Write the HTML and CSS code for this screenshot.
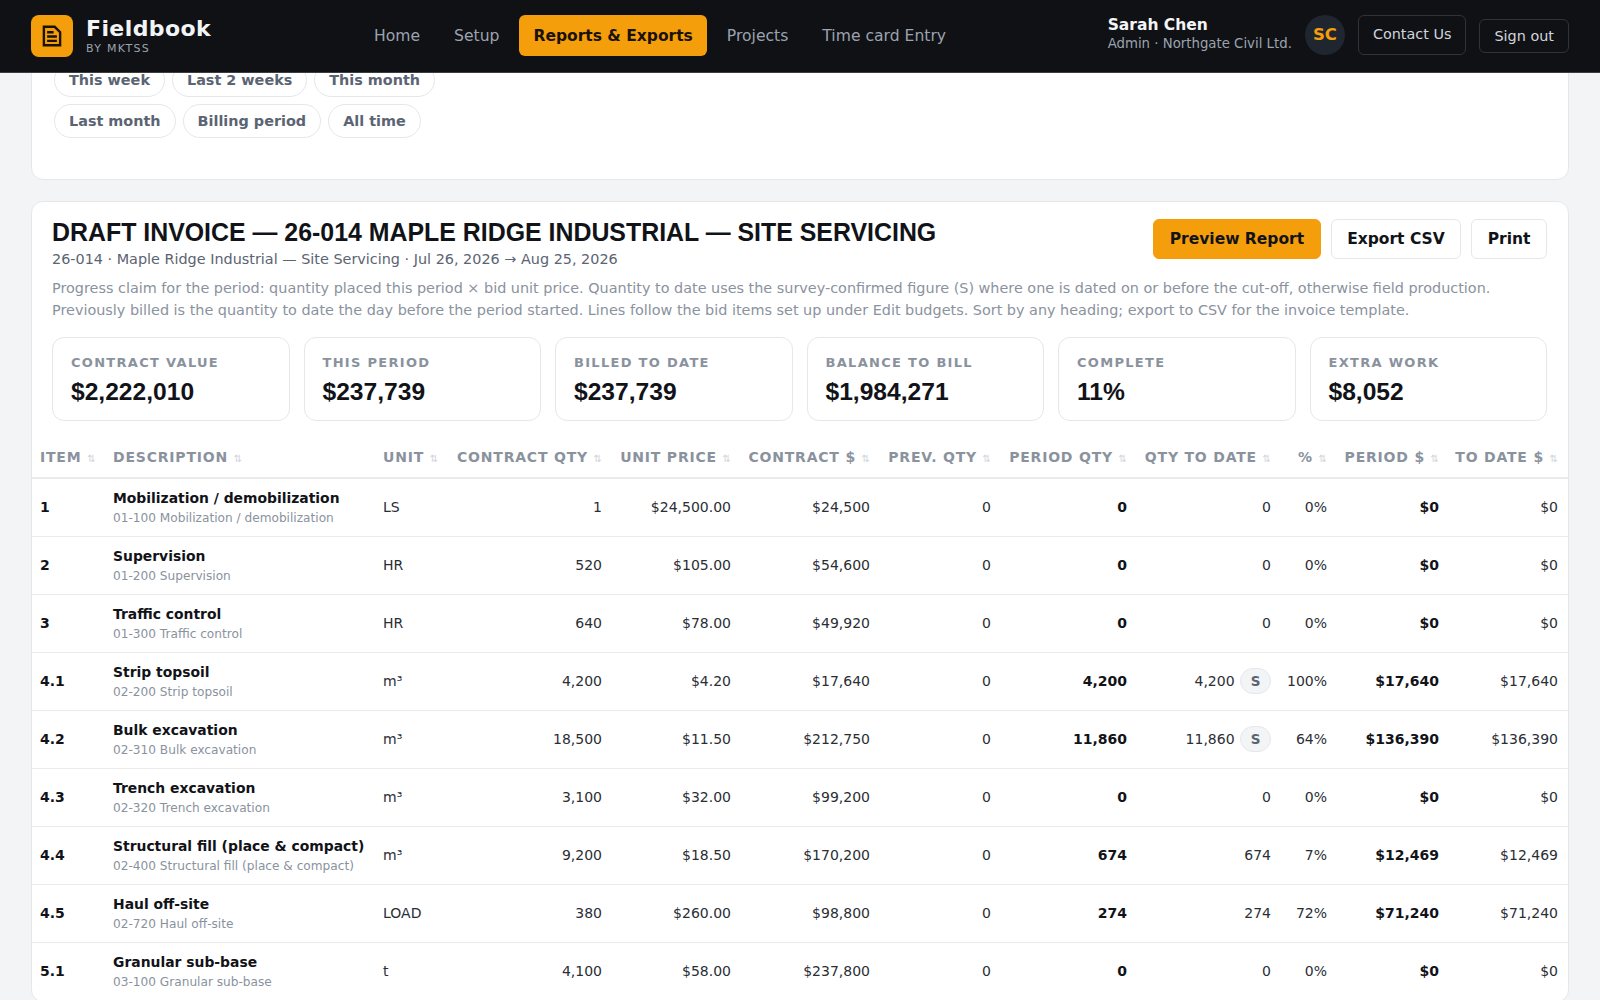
FILE: index.html
```html
<!DOCTYPE html>
<html lang="en">
<head>
<meta charset="utf-8">
<title>Fieldbook</title>
<link rel="stylesheet" href="styles.css">
</head>
<body>
<header class="topbar">
  <div class="brand">
    <div class="logo"><svg viewBox="0 0 24 24" width="26" height="26" fill="none" stroke="#1a1205" stroke-width="2.2" stroke-linejoin="miter"><path d="M4.5 3.5h10l5 5v12h-15z"/><path d="M7.5 8.5h6M7.5 12.5h9M7.5 16.5h9"/></svg></div>
    <div class="brand-text"><div class="brand-name">Fieldbook</div><div class="brand-sub">BY MKTSS</div></div>
  </div>
  <nav class="nav">
    <a class="nav-link">Home</a>
    <a class="nav-link">Setup</a>
    <a class="nav-link active">Reports &amp; Exports</a>
    <a class="nav-link">Projects</a>
    <a class="nav-link">Time card Entry</a>
  </nav>
  <div class="user">
    <div class="user-text"><div class="user-name">Sarah Chen</div><div class="user-role">Admin · Northgate Civil Ltd.</div></div>
    <div class="avatar">SC</div>
    <button class="ghost contact">Contact Us</button>
    <button class="ghost signout">Sign out</button>
  </div>
</header>
<main class="page">
  <section class="card filter">
    <div class="chips">
      <span class="chip">This week</span><span class="chip">Last 2 weeks</span><span class="chip">This month</span>
    </div>
    <div class="chips">
      <span class="chip">Last month</span><span class="chip">Billing period</span><span class="chip">All time</span>
    </div>
  </section>
  <section class="card report">
    <div class="report-head">
      <div class="report-title">
        <h1>DRAFT INVOICE — 26-014 MAPLE RIDGE INDUSTRIAL — SITE SERVICING</h1>
        <div class="meta">26-014 · Maple Ridge Industrial — Site Servicing · Jul 26, 2026 → Aug 25, 2026</div>
      </div>
      <div class="actions">
        <button class="btn primary">Preview Report</button>
        <button class="btn">Export CSV</button>
        <button class="btn">Print</button>
      </div>
    </div>
    <p class="note">Progress claim for the period: quantity placed this period × bid unit price. Quantity to date uses the survey-confirmed figure (S) where one is dated on or before the cut-off, otherwise field production. Previously billed is the quantity to date the day before the period started. Lines follow the bid items set up under Edit budgets. Sort by any heading; export to CSV for the invoice template.</p>
    <div class="stats">
      <div class="stat"><div class="stat-label">Contract value</div><div class="stat-value">$2,222,010</div></div>
      <div class="stat"><div class="stat-label">This period</div><div class="stat-value">$237,739</div></div>
      <div class="stat"><div class="stat-label">Billed to date</div><div class="stat-value">$237,739</div></div>
      <div class="stat"><div class="stat-label">Balance to bill</div><div class="stat-value">$1,984,271</div></div>
      <div class="stat"><div class="stat-label">Complete</div><div class="stat-value">11%</div></div>
      <div class="stat"><div class="stat-label">Extra work</div><div class="stat-value">$8,052</div></div>
    </div>
    <table class="grid">
      <colgroup>
        <col class="c1"><col class="c2"><col class="c3"><col class="c4"><col class="c5"><col class="c6"><col class="c7"><col class="c8"><col class="c9"><col class="c10"><col class="c11"><col class="c12">
      </colgroup>
      <thead>
        <tr>
          <th>Item <i>⇅</i></th><th>Description <i>⇅</i></th><th>Unit <i>⇅</i></th>
          <th class="r">Contract qty <i>⇅</i></th><th class="r">Unit price <i>⇅</i></th><th class="r">Contract $ <i>⇅</i></th>
          <th class="r">Prev. qty <i>⇅</i></th><th class="r">Period qty <i>⇅</i></th><th class="r">Qty to date <i>⇅</i></th>
          <th class="r">% <i>⇅</i></th><th class="r">Period $ <i>⇅</i></th><th class="r">To date $ <i>⇅</i></th>
        </tr>
      </thead>
      <tbody>
        <tr><td class="b">1</td><td><div class="name">Mobilization / demobilization</div><div class="sub">01-100 Mobilization / demobilization</div></td><td>LS</td><td class="r">1</td><td class="r">$24,500.00</td><td class="r">$24,500</td><td class="r">0</td><td class="r b">0</td><td class="r">0</td><td class="r">0%</td><td class="r b">$0</td><td class="r">$0</td></tr>
        <tr><td class="b">2</td><td><div class="name">Supervision</div><div class="sub">01-200 Supervision</div></td><td>HR</td><td class="r">520</td><td class="r">$105.00</td><td class="r">$54,600</td><td class="r">0</td><td class="r b">0</td><td class="r">0</td><td class="r">0%</td><td class="r b">$0</td><td class="r">$0</td></tr>
        <tr><td class="b">3</td><td><div class="name">Traffic control</div><div class="sub">01-300 Traffic control</div></td><td>HR</td><td class="r">640</td><td class="r">$78.00</td><td class="r">$49,920</td><td class="r">0</td><td class="r b">0</td><td class="r">0</td><td class="r">0%</td><td class="r b">$0</td><td class="r">$0</td></tr>
        <tr><td class="b">4.1</td><td><div class="name">Strip topsoil</div><div class="sub">02-200 Strip topsoil</div></td><td>m³</td><td class="r">4,200</td><td class="r">$4.20</td><td class="r">$17,640</td><td class="r">0</td><td class="r b">4,200</td><td class="r">4,200 <span class="badge">S</span></td><td class="r">100%</td><td class="r b">$17,640</td><td class="r">$17,640</td></tr>
        <tr><td class="b">4.2</td><td><div class="name">Bulk excavation</div><div class="sub">02-310 Bulk excavation</div></td><td>m³</td><td class="r">18,500</td><td class="r">$11.50</td><td class="r">$212,750</td><td class="r">0</td><td class="r b">11,860</td><td class="r">11,860 <span class="badge">S</span></td><td class="r">64%</td><td class="r b">$136,390</td><td class="r">$136,390</td></tr>
        <tr><td class="b">4.3</td><td><div class="name">Trench excavation</div><div class="sub">02-320 Trench excavation</div></td><td>m³</td><td class="r">3,100</td><td class="r">$32.00</td><td class="r">$99,200</td><td class="r">0</td><td class="r b">0</td><td class="r">0</td><td class="r">0%</td><td class="r b">$0</td><td class="r">$0</td></tr>
        <tr><td class="b">4.4</td><td><div class="name">Structural fill (place &amp; compact)</div><div class="sub">02-400 Structural fill (place &amp; compact)</div></td><td>m³</td><td class="r">9,200</td><td class="r">$18.50</td><td class="r">$170,200</td><td class="r">0</td><td class="r b">674</td><td class="r">674</td><td class="r">7%</td><td class="r b">$12,469</td><td class="r">$12,469</td></tr>
        <tr><td class="b">4.5</td><td><div class="name">Haul off-site</div><div class="sub">02-720 Haul off-site</div></td><td>LOAD</td><td class="r">380</td><td class="r">$260.00</td><td class="r">$98,800</td><td class="r">0</td><td class="r b">274</td><td class="r">274</td><td class="r">72%</td><td class="r b">$71,240</td><td class="r">$71,240</td></tr>
        <tr><td class="b">5.1</td><td><div class="name">Granular sub-base</div><div class="sub">03-100 Granular sub-base</div></td><td>t</td><td class="r">4,100</td><td class="r">$58.00</td><td class="r">$237,800</td><td class="r">0</td><td class="r b">0</td><td class="r">0</td><td class="r">0%</td><td class="r b">$0</td><td class="r">$0</td></tr>
      </tbody>
    </table>
  </section>
</main>
</body>
</html>
```
FILE: styles.css
```css
* { box-sizing: border-box; }
html, body { margin: 0; height: 1000px; overflow: hidden; }
body { background: #f3f4f6; font-family: "DejaVu Sans", sans-serif; color: #111318; font-size: 14px; }

.topbar { position: fixed; top: 0; left: 0; right: 0; z-index: 5; height: 73px; background: #0f1115; border-bottom: 1px solid #3a3d42; display: flex; align-items: center; padding: 0 31px 1px 31px; }
.brand { display: flex; align-items: center; gap: 13px; width: 329px; }
.logo { width: 42px; height: 42px; border-radius: 8px; background: #f59e0b; display: flex; align-items: center; justify-content: center; }
.brand-name { font-size: 22px; font-weight: 700; line-height: 26px; color: #f3f4f6; letter-spacing: 0.4px; }
.brand-sub { font-size: 11px; line-height: 13px; letter-spacing: 1.3px; color: #9ca3af; }
.nav { display: flex; align-items: center; gap: 6px; flex: 1; }
.nav-link { padding: 0 14px; height: 41px; display: flex; align-items: center; border-radius: 6px; color: #9ca3af; font-size: 15.6px; }
.nav-link.active { background: #f59e0b; color: #1a1205; font-weight: 700; font-size: 15.5px; }
.user { display: flex; align-items: center; gap: 13px; }
.user-text { margin-bottom: 2px; }
.user-name { color: #f3f4f6; font-size: 15.5px; font-weight: 700; line-height: 19px; }
.user-role { color: #9ca3af; font-size: 13.3px; line-height: 18px; }
.avatar { width: 40px; height: 40px; margin-bottom: 2px; border-radius: 50%; background: #1f2630; color: #f59e0b; font-weight: 700; font-size: 16.5px; display: flex; align-items: center; justify-content: center; }
.ghost { background: transparent; border: 1px solid #2f333a; border-radius: 6px; color: #d1d5db; font: 14.4px "DejaVu Sans", sans-serif; padding: 0 14px; }
.contact { height: 40px; margin-bottom: 2px; padding-bottom: 2px; }
.signout { height: 34px; }

.page { padding: 0 31px; }
.card { background: #fff; border: 1px solid #e5e7eb; border-radius: 12px; }
.filter { height: 180px; padding: 62px 22px 0; margin-bottom: 21px; }
.chips { display: flex; gap: 7px; margin-bottom: 7px; }
.chip { height: 34px; padding: 0 14px; display: flex; align-items: center; border: 1px solid #e5e7eb; border-radius: 17px; color: #5b6472; font-size: 14.4px; font-weight: 700; }

.report { padding: 15px 0 0; }
.report-head { display: flex; justify-content: space-between; padding: 0 21px 0 20px; }
.report-title { padding-top: 0; }
h1 { margin: 0; font: 700 24.9px/30px "Liberation Sans", sans-serif; color: #111318; }
.meta { font-size: 14.4px; line-height: 24px; color: #5b6472; }
.actions { display: flex; gap: 10px; padding-top: 2px; height: 42px; }
.btn { height: 40px; padding: 0 15.5px; border: 1px solid #e5e7eb; border-radius: 6px; background: #fff; color: #111318; font: 700 15.5px "DejaVu Sans", sans-serif; }
.btn.primary { background: #f59e0b; border-color: #f59e0b; }
.note { margin: 6px 21px 0 20px; font-size: 14.4px; line-height: 22.3px; color: #8a929e; }
.stats { display: grid; grid-template-columns: repeat(6, 1fr); gap: 14px; margin: 15.5px 21px 0 20px; }
.stat { height: 84px; padding: 17px 18px 0; border: 1px solid #e5e7eb; border-radius: 12px; }
.stat-label { font-size: 13px; line-height: 16px; font-weight: 700; letter-spacing: 1.3px; text-transform: uppercase; color: #8a929e; }
.stat-value { margin-top: 6px; font: 700 24.6px/30px "Liberation Sans", sans-serif; color: #111318; }

.grid { width: 100%; table-layout: fixed; border-collapse: collapse; margin-top: 16px; font-size: 14px; }
.c1 { width: 73px; } .c2 { width: 270px; } .c3 { width: 73px; } .c4 { width: 162px; } .c5 { width: 129px; } .c6 { width: 139px; }
.c7 { width: 121px; } .c8 { width: 136px; } .c9 { width: 144px; } .c10 { width: 56px; } .c11 { width: 112px; } .c12 { width: 121px; }
th { height: 41px; padding: 0 8px; text-align: left; font-size: 14px; font-weight: 700; letter-spacing: 0.8px; text-transform: uppercase; color: #8a929e; white-space: nowrap; border-bottom: 2px solid #e9ebee; }
th:last-child, td:last-child { padding-right: 10px; }
th i { font-style: normal; font-weight: 400; font-size: 10px; color: #cfd3d9; letter-spacing: 0; }
td { height: 58px; padding: 0 8px; color: #2a2e35; border-bottom: 1px solid #e9ebee; vertical-align: middle; white-space: nowrap; }
.r { text-align: right; }
td.b { font-weight: 700; color: #111318; }
.name { font-size: 13.9px; font-weight: 700; line-height: 19px; color: #111318; }
.sub { font-size: 12.15px; line-height: 16px; margin-top: 2px; color: #8a929e; }
.badge { display: inline-flex; align-items: center; justify-content: center; width: 31px; height: 26px; margin-left: 1px; border: 1px solid #e5e7eb; border-radius: 13px; background: #f3f4f6; color: #5b6472; font-size: 13.5px; font-weight: 700; }
```
